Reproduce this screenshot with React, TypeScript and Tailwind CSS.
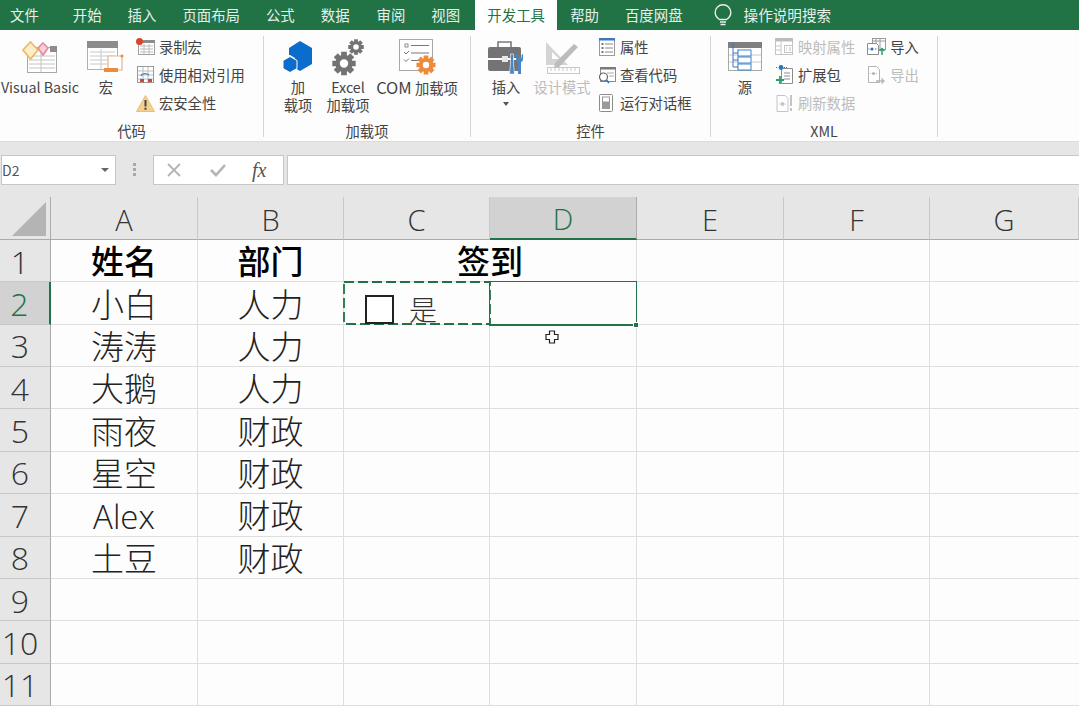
import React from "react";

const CJK = "font-['Noto_Sans_CJK_SC','Noto_Sans',sans-serif]";
const LAT = "font-['Open_Sans','Noto_Sans_CJK_SC',sans-serif]";

function Svg({ w, h, children }: { w: number; h: number; children: React.ReactNode }) {
  return (
    <svg width={w} height={h} viewBox={`0 0 ${w} ${h}`} fill="none" className="block shrink-0">
      {children}
    </svg>
  );
}

const IconVB = () => (
  <Svg w={36} h={33}>
    <rect x="5.5" y="6.5" width="29" height="25" fill="#fff" stroke="#a8a8a8" />
    <rect x="28" y="5" width="7" height="6" fill="#8c8c8c" />
    <path d="M7 15h26M7 19h26M7 23h26M7 27h26M19 12v19" stroke="#c4c4c4" />
    <path d="M8.5 1l7.5 8-7.5 9L1 9z" fill="#fbeecb" stroke="#efbc62" strokeWidth="1.8" />
    <path d="M21 2l5 5-5 7-5-7z" fill="#f8d0da" stroke="#e48aa0" strokeWidth="1.6" />
  </Svg>
);
const IconMacro = () => (
  <Svg w={38} h={32}>
    <rect x="0.5" y="0.5" width="30" height="28" fill="#fff" stroke="#b0b0b0" />
    <rect x="0" y="0" width="31" height="7" fill="#8c8c8c" />
    <path d="M3 11h25M3 15h25M3 19h25M3 23h25M14 8v20" stroke="#c8c8c8" />
    <path d="M21 15h14v14H21z" fill="#fff" stroke="#eab38a" strokeWidth="1.2" />
    <path d="M17 27h14v4H17z" fill="#ed8b3c" />
    <circle cx="35" cy="15" r="1.5" fill="#ed8b3c" />
  </Svg>
);
const IconRecord = () => (
  <Svg w={20} h={18}>
    <rect x="2.5" y="2.5" width="16" height="14" fill="#fff" stroke="#a0a0a0" />
    <rect x="2" y="2" width="17" height="3" fill="#8c8c8c" />
    <path d="M4 8h13M4 11h13M4 14h13M8 6v10M13 6v10" stroke="#bdbdbd" />
    <circle cx="3.5" cy="3.5" r="3.5" fill="#d8452b" />
  </Svg>
);
const IconRelative = () => (
  <Svg w={18} h={18}>
    <rect x="0.5" y="0.5" width="16" height="16" fill="#fff" stroke="#9a9a9a" />
    <path d="M1 5h15M1 9h15M1 13h15M6 1v15M11 1v15" stroke="#bdbdbd" />
    <path d="M4 10c1-3 6-3 8-1" stroke="#3e86c8" strokeWidth="1.4" />
    <rect x="3" y="13" width="4" height="3" fill="#d8452b" />
    <rect x="11" y="13" width="4" height="3" fill="#d8452b" />
  </Svg>
);
const IconWarn = () => (
  <Svg w={19} h={17}>
    <path d="M9.5 0.5L18.5 16.5H0.5z" fill="#f3d18e" stroke="#eabf6e" />
    <path d="M8.5 5h2v6.5h-2zM8.5 12.8h2v2h-2z" fill="#444" />
  </Svg>
);
const IconCube = () => (
  <Svg w={30} h={32}>
    <path d="M17 0l12 7v16l-12 7-5-3V17l-5-3H6V7z" fill="#0a6ccb" />
    <path d="M7 15.5l7 4v8l-7 4-7-4v-8z" fill="#0a6ccb" stroke="#fff" strokeWidth="1" />
  </Svg>
);
function gearPath(cx: number, cy: number, r: number) {
  const pts: string[] = [];
  for (let i = 0; i < 8; i++) {
    const a = (i * Math.PI) / 4;
    const d = 0.24;
    const o = r;
    const n = r * 0.72;
    pts.push(`${cx + n * Math.cos(a - d * 1.4)},${cy + n * Math.sin(a - d * 1.4)}`);
    pts.push(`${cx + o * Math.cos(a - d)},${cy + o * Math.sin(a - d)}`);
    pts.push(`${cx + o * Math.cos(a + d)},${cy + o * Math.sin(a + d)}`);
    pts.push(`${cx + n * Math.cos(a + d * 1.4)},${cy + n * Math.sin(a + d * 1.4)}`);
  }
  return pts.join(" ");
}
const IconGears = () => (
  <Svg w={32} h={37}>
    <polygon points={gearPath(12, 24.5, 12)} fill="#737373" />
    <circle cx="12" cy="24.5" r="4.2" fill="#fff" />
    <polygon points={gearPath(24, 8, 8)} fill="#737373" />
    <circle cx="24" cy="8" r="2.8" fill="#fff" />
  </Svg>
);
const IconCom = () => (
  <Svg w={37} h={36}>
    <rect x="0.5" y="0.5" width="33" height="31" fill="#fff" stroke="#a8a8a8" />
    <rect x="6" y="5" width="3" height="3" stroke="#777" strokeWidth="0.8" />
    <path d="M12 6.5h18M12 14h18M12 21.5h10" stroke="#777" />
    <path d="M5 13l2 2 3-3M5 20.5l2 2 3-3" stroke="#777" strokeWidth="1" />
    <polygon points={gearPath(27, 26, 9.8)} fill="#ed8b3c" />
    <circle cx="27" cy="26" r="3.2" fill="#fff" />
  </Svg>
);
const IconInsert = () => (
  <Svg w={38} h={36}>
    <path d="M11 8V3h13v5" stroke="#7a7a7a" strokeWidth="1.6" />
    <path d="M1 10a2 2 0 012-2h29a2 2 0 012 2v9H20v-2h-5v2H1z" fill="#747474" />
    <path d="M1 21h14v2h5v-2h14v9a2 2 0 01-2 2H3a2 2 0 01-2-2z" fill="#747474" />
    <rect x="15" y="17" width="6" height="6" fill="#e8e8e8" />
    <path d="M23.5 15h3v10l1 10h-5l1-10z" fill="#4a86c6" stroke="#fff" strokeWidth="0.6" />
    <path d="M29 15v5c0 2 1 3 2 3v12h3V23c1 0 2-1 2-3v-5l-1.5 1v3h-1.5v-3h-1v3h-1.5v-3z" fill="#4a86c6" />
  </Svg>
);
const IconDesign = () => (
  <Svg w={36} h={36}>
    <path d="M2 3v23h22z" fill="#d4d4d4" />
    <path d="M8 13v7h7z" fill="#fff" />
    <path d="M11 24L30 5l4 3-19 20-5 1z" fill="#bcbcbc" />
    <rect x="3.5" y="28.5" width="32" height="6" fill="#fff" stroke="#c8c8c8" />
    <path d="M7 29v3M11 29v3M15 29v3M19 29v3M23 29v3M27 29v3M31 29v3" stroke="#c8c8c8" />
  </Svg>
);
const IconProps = () => (
  <Svg w={16} h={18}>
    <rect x="0.5" y="0.5" width="15" height="17" fill="#fff" stroke="#9a9a9a" />
    <rect x="0" y="0" width="16" height="2.5" fill="#3e78bc" />
    <path d="M6 6h8M6 10h8M6 14h8" stroke="#8a8a8a" />
    <rect x="2.5" y="5" width="2" height="2" fill="#777" />
    <rect x="2.5" y="9" width="2" height="2" fill="#777" />
    <rect x="2.5" y="13" width="2" height="2" fill="#777" />
  </Svg>
);
const IconCode = () => (
  <Svg w={18} h={18}>
    <rect x="2.5" y="1.5" width="15" height="14" fill="#fff" stroke="#8c8c8c" />
    <rect x="2" y="1" width="16" height="2.5" fill="#7a7a7a" />
    <path d="M9 7h7M11 10h5" stroke="#aaa" />
    <circle cx="5.5" cy="11" r="4" fill="#fff" stroke="#666" strokeWidth="1.2" />
    <path d="M8.5 14l2.5 3" stroke="#2e75b6" strokeWidth="1.6" />
  </Svg>
);
const IconDialog = () => (
  <Svg w={15} h={18}>
    <rect x="0.5" y="0.5" width="13" height="17" rx="1" fill="#fff" stroke="#8c8c8c" />
    <rect x="3.5" y="3" width="7" height="5" fill="#fff" stroke="#999" />
    <rect x="3" y="8" width="8" height="7" fill="#9a9a9a" />
  </Svg>
);
const IconSource = () => (
  <Svg w={34} h={30}>
    <rect x="0.5" y="0.5" width="33" height="28" fill="#fff" stroke="#a8a8a8" />
    <rect x="0" y="0" width="34" height="6" fill="#7f7f7f" />
    <path d="M1 13h32M1 20h32M10 7v21" stroke="#c8c8c8" />
    <path d="M5 1v24h5M5 11h5M5 18h5" stroke="#3e78bc" />
    <rect x="10" y="8" width="13" height="6" fill="#fff" stroke="#3e86c8" />
    <rect x="10" y="15" width="13" height="6" fill="#fff" stroke="#3e86c8" />
    <rect x="10" y="22" width="13" height="6" fill="#fff" stroke="#3e86c8" />
  </Svg>
);
const IconMap = () => (
  <Svg w={19} h={18}>
    <rect x="0.5" y="0.5" width="17" height="16" fill="#fff" stroke="#c4c4c4" />
    <rect x="0" y="0" width="18" height="3.5" fill="#bcbcbc" />
    <path d="M6 4v12M1 8h5M1 12h5" stroke="#c8c8c8" />
    <rect x="9.5" y="7.5" width="8" height="7" stroke="#c4c4c4" />
    <path d="M11 10h1M14 10h2M11 12h1M14 12h2" stroke="#bbb" />
  </Svg>
);
const IconExpand = () => (
  <Svg w={18} h={20}>
    <path d="M5.5 3.5h11v15h-11z" fill="#fff" stroke="#8c8c8c" />
    <path d="M8 8h6M8 11h6M8 14h6" stroke="#8c8c8c" />
    <circle cx="5" cy="2.5" r="2.4" fill="#2e75b6" />
    <path d="M0 2.5h2M8 2.5h3" stroke="#2e75b6" strokeDasharray="1 1" />
    <path d="M4 11v8M0 15h8" stroke="#2c9e6a" strokeWidth="1.8" />
  </Svg>
);
const IconRefresh = () => (
  <Svg w={17} h={18}>
    <path d="M1 1.5h8l3 3v13H1z" fill="#fff" stroke="#c4c4c4" />
    <circle cx="6.5" cy="10" r="2" fill="#c4c4c4" />
    <path d="M3 10h1M9 10h1" stroke="#c4c4c4" />
    <path d="M14 1h2v11h-2zM14 14h2v3h-2z" fill="#c4c4c4" />
  </Svg>
);
const IconImport = () => (
  <Svg w={19} h={18}>
    <rect x="5.5" y="0.5" width="13" height="11" fill="#fff" stroke="#9a9a9a" />
    <path d="M6 3h12M9 1v10M13 1v10" stroke="#9a9a9a" />
    <path d="M0.5 5.5h9l2 2v9h-11z" fill="#fff" stroke="#8c8c8c" />
    <circle cx="5" cy="11" r="1.6" fill="#2e75b6" />
    <path d="M1.5 11h1M8 11h1.5" stroke="#2e75b6" />
    <path d="M15 17v-6M12.5 13l2.5-2.5 2.5 2.5" stroke="#2c9e6a" strokeWidth="1.5" />
  </Svg>
);
const IconExport = () => (
  <Svg w={17} h={19}>
    <path d="M0.5 0.5h8l3 3v13h-11z" fill="#fff" stroke="#b4b4b4" />
    <circle cx="5.5" cy="7.5" r="1.6" fill="#b4b4b4" />
    <path d="M2 7.5h1M8 7.5h1" stroke="#b4b4b4" />
    <path d="M8 15h8M13.5 12.5L16 15l-2.5 2.5" stroke="#b4b4b4" strokeWidth="1.3" />
  </Svg>
);

const LABEL = "text-[14.3px] leading-[18px] whitespace-nowrap";

function Big({ w, icon, lines, dim, arrow }: { w: number; icon: React.ReactNode; lines: React.ReactNode[]; dim?: boolean; arrow?: boolean }) {
  return (
    <div className="flex flex-col items-center shrink-0" style={{ width: w }}>
      <div className="h-[42px] flex items-center justify-center">{icon}</div>
      <div className={`flex flex-col items-center ${LABEL} ${dim ? "text-[#bcbcbc]" : "text-[#444]"}`}>
        {lines.map((l, i) => (
          <span key={i}>{l}</span>
        ))}
        {arrow && <span className="mt-[6px] w-0 h-0 border-x-[3.5px] border-x-transparent border-t-[4px] border-t-[#555]" />}
      </div>
    </div>
  );
}

function Small({ icon, text, dim, w }: { icon: React.ReactNode; text: string; dim?: boolean; w: number }) {
  return (
    <div className="h-[28px] flex items-center">
      <div className="flex justify-center items-center shrink-0" style={{ width: w }}>{icon}</div>
      <span className={`${LABEL} ml-[3px] ${dim ? "text-[#bcbcbc]" : "text-[#444]"}`}>{text}</span>
    </div>
  );
}

function Group({ w, label, children }: { w: number; label: string; children: React.ReactNode }) {
  return (
    <div className="flex flex-col shrink-0 h-[101px] border-r border-[#d4d4d4]" style={{ width: w }}>
      <div className="flex flex-1 min-h-0">{children}</div>
      <div className="text-center text-[14.3px] leading-[18px] text-[#444] -mb-[3px]">{label}</div>
    </div>
  );
}

const TABS: [string, number][] = [
  ["文件", 10],
  ["开始", 34],
  ["插入", 26],
  ["页面布局", 26],
  ["公式", 26],
  ["数据", 26],
  ["审阅", 27],
  ["视图", 26],
];

function Tabs() {
  return (
    <div className="h-[30px] bg-[#217346] flex items-center text-[14.4px] text-[#e6f0ea] whitespace-nowrap">
      {TABS.map(([t, ml]) => (
        <span key={t} style={{ marginLeft: ml }}>{t}</span>
      ))}
      <div className="ml-[15px] w-[82px] h-[30px] bg-white flex items-center justify-center text-[#217346]">开发工具</div>
      <span className="ml-[13px]">帮助</span>
      <span className="ml-[26px]">百度网盘</span>
      <svg width="18" height="23" viewBox="0 0 18 23" fill="none" className="ml-[31px]">
        <path d="M5.5 15.5C3 14 1.2 11.5 1.2 8.6a7.8 7.8 0 0115.6 0c0 2.9-1.8 5.4-4.3 6.9z" stroke="#e6f0ea" strokeWidth="1.4" />
        <path d="M6 18h6M6.5 20.5h5" stroke="#e6f0ea" strokeWidth="1.4" />
      </svg>
      <span className="ml-[12px] text-[14.6px]">操作说明搜索</span>
    </div>
  );
}

function Ribbon() {
  return (
    <div className="h-[112px] bg-[#fdfdfd] pt-[6px] flex items-start border-b border-[#dcdcdc]">
      <Group w={264} label="代码">
        <Big w={80} icon={<IconVB />} lines={["Visual Basic"]} />
        <Big w={52} icon={<IconMacro />} lines={["宏"]} />
        <div className="flex flex-col -mt-[3px] ml-[3px]">
          <Small w={21} icon={<IconRecord />} text="录制宏" />
          <Small w={21} icon={<IconRelative />} text="使用相对引用" />
          <Small w={21} icon={<IconWarn />} text="宏安全性" />
        </div>
      </Group>
      <Group w={207} label="加载项">
        <Big w={68} icon={<IconCube />} lines={["加", "载项"]} />
        <Big w={32} icon={<IconGears />} lines={["Excel", "加载项"]} />
        <Big w={106} icon={<IconCom />} lines={[<><span className="text-[16.5px]">COM</span> 加载项</>]} />
      </Group>
      <Group w={240} label="控件">
        <Big w={70} icon={<IconInsert />} lines={["插入"]} arrow />
        <Big w={42} icon={<IconDesign />} lines={["设计模式"]} dim />
        <div className="flex flex-col -mt-[3px] ml-[13px]">
          <Small w={21} icon={<IconProps />} text="属性" />
          <Small w={21} icon={<IconCode />} text="查看代码" />
          <Small w={21} icon={<IconDialog />} text="运行对话框" />
        </div>
      </Group>
      <Group w={227} label="XML">
        <Big w={68} icon={<IconSource />} lines={["源"]} />
        <div className="flex flex-col -mt-[3px] -ml-[5px]">
          <Small w={21} icon={<IconMap />} text="映射属性" dim />
          <Small w={21} icon={<IconExpand />} text="扩展包" />
          <Small w={21} icon={<IconRefresh />} text="刷新数据" dim />
        </div>
        <div className="flex flex-col -mt-[3px] ml-[11px]">
          <Small w={21} icon={<IconImport />} text="导入" />
          <Small w={21} icon={<IconExport />} text="导出" dim />
        </div>
      </Group>
    </div>
  );
}

function FormulaBar() {
  return (
    <div className="h-[55px] bg-[#e6e6e6] pt-[13px] flex items-start">
      <div className="ml-px w-[115px] h-[30px] bg-white border border-[#c6c6c6] flex items-center justify-between pr-[6px] text-[14px] text-[#555]">
        <span>D2</span>
        <span className="w-0 h-0 border-x-[4px] border-x-transparent border-t-[4px] border-t-[#666]" />
      </div>
      <div className="ml-[17px] mt-[8px] flex flex-col gap-[2px] w-[3px]">
        <span className="h-[3px] bg-[#a8a8a8]" />
        <span className="h-[3px] bg-[#a8a8a8]" />
        <span className="h-[3px] bg-[#a8a8a8]" />
      </div>
      <div className="ml-[17px] w-[131px] h-[30px] bg-white border border-[#c6c6c6] flex items-center">
        <svg width="14" height="14" viewBox="0 0 14 14" className="ml-[13px]"><path d="M1 1l12 12M13 1L1 13" stroke="#b4b4b4" strokeWidth="1.8" /></svg>
        <svg width="16" height="14" viewBox="0 0 16 14" className="ml-[29px]"><path d="M1 7l5 5L15 2" stroke="#b4b4b4" strokeWidth="2.6" fill="none" /></svg>
        <span className="ml-[26px] text-[20px] leading-none italic text-[#555] font-['Liberation_Serif',serif]">fx</span>
      </div>
      <div className="ml-[3px] flex-1 h-[30px] bg-white border border-[#c6c6c6] border-r-0" />
    </div>
  );
}

const COLS = ["A", "B", "C", "D", "E", "F", "G"];
const DATA: [string, string][] = [
  ["姓名", "部门"],
  ["小白", "人力"],
  ["涛涛", "人力"],
  ["大鹅", "人力"],
  ["雨夜", "财政"],
  ["星空", "财政"],
  ["Alex", "财政"],
  ["土豆", "财政"],
  ["", ""],
  ["", ""],
  ["", ""],
];

const GRID = "grid grid-cols-[51px_147px_146px_146px_147px_147px_146px_149px] grid-rows-[43px_repeat(11,42.36px)]";
const CELL = "border-r border-b border-[#dedede] bg-[#fdfdfd] flex items-center justify-center text-[33px] leading-none";
const BODY = "font-light text-[#222]";
const HEAD = "font-medium text-black";

function Sheet() {
  return (
    <div className={`relative ${GRID}`}>
      <div className="bg-[#e6e6e6] border-r border-b border-[#ababab] flex items-end justify-end pr-[3px] pb-[3px]">
        <svg width="35" height="34" viewBox="0 0 35 34"><path d="M34 0v34H0z" fill="#b4b4b4" /></svg>
      </div>
      {COLS.map((c) => (
        <div
          key={c}
          className={`flex items-center justify-center pt-[2px] text-[29px] font-light leading-none ${LAT} border-r ${
            c === "D"
              ? "bg-[#d2d2d2] text-[#217346] border-b-2 border-b-[#217346] border-r-[#ababab]"
              : "bg-[#e6e6e6] text-[#333] border-b border-b-[#ababab] border-r-[#c8c8c8]"
          }`}
        >
          {c}
        </div>
      ))}
      {DATA.map((row, i) => {
        const n = i + 1;
        const tone = n === 1 ? HEAD : BODY;
        return (
          <React.Fragment key={n}>
            <div
              className={`flex items-center justify-center pr-[10px] pt-[2px] text-[32px] font-light leading-none ${LAT} border-b border-b-[#c8c8c8] ${
                n === 2
                  ? "bg-[#d2d2d2] text-[#217346] border-r-2 border-r-[#217346]"
                  : "bg-[#e6e6e6] text-[#333] border-r border-r-[#ababab]"
              }`}
            >
              {n}
            </div>
            <div className={`${CELL} ${tone} ${row[0] === "Alex" ? `${LAT} pt-[4px]` : ""}`}>{row[0]}</div>
            <div className={`${CELL} ${tone}`}>{row[1]}</div>
            {n === 1 ? (
              <div className={`${CELL} ${HEAD} col-span-2`}>签到</div>
            ) : (
              <>
                <div className={CELL} />
                <div className={CELL} />
              </>
            )}
            <div className={CELL} />
            <div className={CELL} />
            <div className={`${CELL} border-r-0`} />
          </React.Fragment>
        );
      })}
      <svg className="absolute left-[343px] top-[84px]" width="148" height="44" viewBox="0 0 148 44" fill="none">
        <rect x="1" y="1" width="146" height="42" stroke="#217346" strokeWidth="1.8" strokeDasharray="10 4" />
      </svg>
      <div className="absolute left-[365px] top-[98px] w-[29px] h-[29px] border-2 border-[#222] bg-white" />
      <span className="absolute left-[409px] top-[96px] text-[28px] leading-[32px] font-light text-[#333]">是</span>
      <div className="absolute left-[489px] top-[84px] w-[148px] h-[45px] border border-b-2 border-[#217346]" />
      <div className="absolute left-[633px] top-[125px] w-[6px] h-[6px] bg-[#217346] border border-white" />
      <svg className="absolute left-[545px] top-[133px]" width="14" height="14" viewBox="0 0 14 14">
        <path d="M4.5 1h5v3.5H13v5H9.5V13h-5V9.5H1v-5h3.5z" fill="#fff" stroke="#222" strokeWidth="1.2" />
      </svg>
    </div>
  );
}

export default function App() {
  return (
    <div className={`w-[1079px] h-[707px] overflow-hidden bg-white ${CJK}`}>
      <Tabs />
      <Ribbon />
      <FormulaBar />
      <Sheet />
    </div>
  );
}
